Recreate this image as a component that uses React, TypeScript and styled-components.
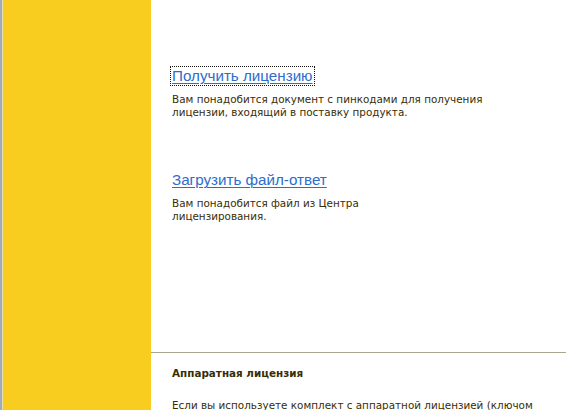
import React from "react";
import styled, { createGlobalStyle } from "styled-components";

const Global = createGlobalStyle`
  html, body { margin: 0; padding: 0; background: #ffffff; overflow: hidden; }
  #root { width: 566px; height: 410px; }
`;

const Page = styled.div`
  display: flex;
  width: 566px;
  height: 410px;
  overflow: hidden;
`;

const SidePanel = styled.div`
  flex: 0 0 149px;
  background: #f9cd20;
  border-left: 2px solid #a3abb9;
  box-shadow: inset 1px 0 0 #e6dca8;
`;

const Main = styled.div`
  flex: 1;
  display: flex;
  flex-direction: column;
  background: #ffffff;
`;

const Top = styled.div`
  flex: 0 0 353px;
  padding: 67px 0 0 21px;
  box-sizing: border-box;
  border-bottom: 1px solid #aca592;
`;

const Section = styled.div<{ $gap: number }>`
  margin-bottom: ${(p) => p.$gap}px;
`;

const LinkText = styled.a<{ $focused?: boolean }>`
  display: inline-block;
  font-family: "Liberation Sans", Arial, sans-serif;
  font-size: 15.2px;
  line-height: 18px;
  color: #2d6dcc;
  text-decoration: underline;
  text-underline-offset: 2px;
  text-decoration-thickness: 1px;
  padding: 0 1px;
  margin-left: -1px;
  outline: ${(p) => (p.$focused ? "1px dotted #111" : "none")};
  outline-offset: 0;
  cursor: pointer;
`;

const Desc = styled.p`
  margin: 8px 0 0 0;
  font-family: "DejaVu Sans", Tahoma, sans-serif;
  font-size: 10.4px;
  line-height: 13px;
  color: #3a2d04;
`;

const Bottom = styled.div`
  padding: 14px 0 0 21px;
`;

const Heading = styled.div`
  font-family: "DejaVu Sans", Tahoma, sans-serif;
  font-weight: bold;
  font-size: 10.4px;
  line-height: 13px;
  color: #3a2d04;
`;

const BottomText = styled.p`
  margin: 19px 0 0 0;
  font-family: "DejaVu Sans", Tahoma, sans-serif;
  font-size: 10.4px;
  line-height: 13px;
  color: #3a2d04;
  white-space: nowrap;
`;

export default function App() {
  return (
    <>
      <Global />
      <Page>
        <SidePanel />
        <Main>
          <Top>
            <Section $gap={52}>
              <LinkText $focused>Получить лицензию</LinkText>
              <Desc>
                Вам понадобится документ с пинкодами для получения
                <br />
                лицензии, входящий в поставку продукта.
              </Desc>
            </Section>
            <Section $gap={0}>
              <LinkText>Загрузить файл-ответ</LinkText>
              <Desc>
                Вам понадобится файл из Центра
                <br />
                лицензирования.
              </Desc>
            </Section>
          </Top>
          <Bottom>
            <Heading>Аппаратная лицензия</Heading>
            <BottomText>
              Если вы используете комплект с аппаратной лицензией (ключом
            </BottomText>
          </Bottom>
        </Main>
      </Page>
    </>
  );
}
